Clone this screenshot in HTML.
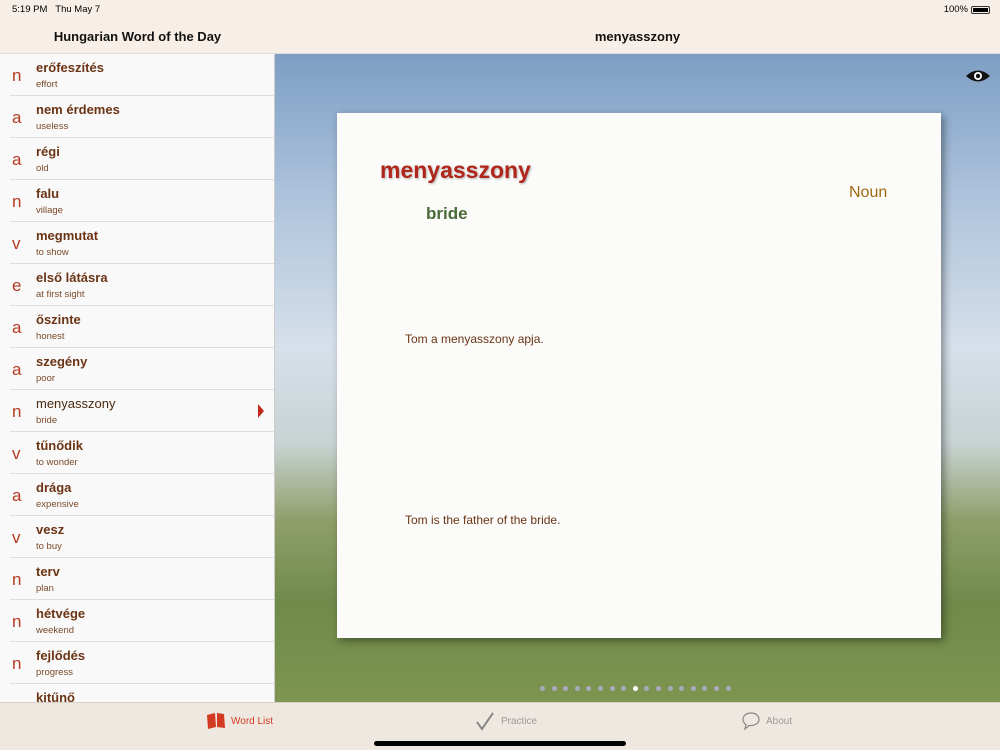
<!DOCTYPE html><html><head><meta charset="utf-8"><style>
*{margin:0;padding:0;box-sizing:border-box}
body{width:1000px;height:750px;overflow:hidden;position:relative;font-family:"Liberation Sans",sans-serif;background:#fff}
.bg{position:absolute;left:275px;top:54px;width:725px;height:648px;background:linear-gradient(180deg,#7d9ec3 0%,#a9c0da 20%,#d6e0ea 45%,#c9d3d4 60%,#8f9f6a 72%,#6f8a4a 85%,#7d9550 100%)}
.hdr{position:absolute;left:0;top:0;width:1000px;height:54px;background:#f7efe7;border-bottom:1px solid #ddd}
.side{position:absolute;left:0;top:54px;width:275px;height:696px;background:#f9f9f9;border-right:1px solid #ccc;overflow:hidden}
.row{height:42px;position:relative;border-bottom:1px solid #ddd;margin-left:10px}
.row .l{position:absolute;left:2px;top:12px;font-size:17px;color:#b53a22}
.row .w{position:absolute;left:26px;top:6px;font-size:13px;font-weight:bold;color:#6b3414}
.row .s{position:absolute;left:26px;top:25px;font-size:9.5px;color:#7a4a2a}
.card{position:absolute;left:337px;top:113px;width:604px;height:525px;background:#fbfbfa;box-shadow:3px 3px 8px rgba(0,0,0,.4)}
.tab{position:absolute;left:0;top:702px;width:1000px;height:48px;background:#efe8e0;border-top:1px solid #d8d0c8}
</style></head><body>
<div class="bg"></div>
<div class="hdr">
<div style="position:absolute;left:12px;top:4px;font-size:9.5px">5:19 PM&nbsp;&nbsp;&nbsp;Thu May 7</div>
<div style="position:absolute;left:0;width:275px;top:29px;text-align:center;font-size:13px;font-weight:bold;color:#111">Hungarian Word of the Day</div>
<div style="position:absolute;left:275px;width:725px;top:29px;text-align:center;font-size:13px;font-weight:bold;color:#111">menyasszony</div>
<div style="position:absolute;right:32px;top:4px;font-size:9.5px">100%</div>
<div style="position:absolute;right:10px;top:6px;width:19px;height:8px;border:1px solid #333;border-radius:2px;padding:1px"><div style="background:#000;height:100%"></div></div>
</div>
<div class="side">
<div class="row"><span class="l">n</span><span class="w">erőfeszítés</span><span class="s">effort</span></div>
<div class="row"><span class="l">a</span><span class="w">nem érdemes</span><span class="s">useless</span></div>
<div class="row"><span class="l">a</span><span class="w">régi</span><span class="s">old</span></div>
<div class="row"><span class="l">n</span><span class="w">falu</span><span class="s">village</span></div>
<div class="row"><span class="l">v</span><span class="w">megmutat</span><span class="s">to show</span></div>
<div class="row"><span class="l">e</span><span class="w">első látásra</span><span class="s">at first sight</span></div>
<div class="row"><span class="l">a</span><span class="w">őszinte</span><span class="s">honest</span></div>
<div class="row"><span class="l">a</span><span class="w">szegény</span><span class="s">poor</span></div>
<div class="row"><span class="l">n</span><span class="w" style="font-weight:normal;color:#4a2a10">menyasszony</span><span class="s">bride</span><span style="position:absolute;right:10px;top:14px;width:0;height:0;border-left:6px solid #c0281a;border-top:7px solid transparent;border-bottom:7px solid transparent"></span></div>
<div class="row"><span class="l">v</span><span class="w">tűnődik</span><span class="s">to wonder</span></div>
<div class="row"><span class="l">a</span><span class="w">drága</span><span class="s">expensive</span></div>
<div class="row"><span class="l">v</span><span class="w">vesz</span><span class="s">to buy</span></div>
<div class="row"><span class="l">n</span><span class="w">terv</span><span class="s">plan</span></div>
<div class="row"><span class="l">n</span><span class="w">hétvége</span><span class="s">weekend</span></div>
<div class="row"><span class="l">n</span><span class="w">fejlődés</span><span class="s">progress</span></div>
<div class="row"><span class="l">a</span><span class="w">kitűnő</span><span class="s">great</span></div>
<div class="row"><span class="l">n</span><span class="w">kefél</span><span class="s"></span></div>
</div>
<svg style="position:absolute;left:965px;top:68px" width="26" height="16" viewBox="0 0 26 16"><path d="M1 8Q13-3 25 8Q13 19 1 8Z" fill="#111"/><circle cx="13" cy="8" r="4" fill="#fff"/><circle cx="13" cy="8" r="2.2" fill="#111"/></svg>
<div class="card">
<div style="position:absolute;left:43px;top:44px;font-size:23px;font-weight:bold;color:#b0261a;text-shadow:1px 1px 2px rgba(0,0,0,.3)">menyasszony</div>
<div style="position:absolute;left:89px;top:91px;font-size:17px;font-weight:bold;color:#4a6a3a">bride</div>
<div style="position:absolute;left:512px;top:71px;font-size:16px;color:#a06a10">Noun</div>
<div style="position:absolute;left:68px;top:219px;font-size:12px;color:#6b3414">Tom a menyasszony apja.</div>
<div style="position:absolute;left:68px;top:400px;font-size:12px;color:#6b3414">Tom is the father of the bride.</div>
</div>
<div style="position:absolute;left:540px;top:686px;display:flex;gap:6.6px">
<i style="width:5px;height:5px;border-radius:50%;background:#aab"></i><i style="width:5px;height:5px;border-radius:50%;background:#aab"></i><i style="width:5px;height:5px;border-radius:50%;background:#aab"></i><i style="width:5px;height:5px;border-radius:50%;background:#aab"></i><i style="width:5px;height:5px;border-radius:50%;background:#aab"></i><i style="width:5px;height:5px;border-radius:50%;background:#aab"></i><i style="width:5px;height:5px;border-radius:50%;background:#aab"></i><i style="width:5px;height:5px;border-radius:50%;background:#aab"></i><i style="width:5px;height:5px;border-radius:50%;background:#fff"></i><i style="width:5px;height:5px;border-radius:50%;background:#aab"></i><i style="width:5px;height:5px;border-radius:50%;background:#aab"></i><i style="width:5px;height:5px;border-radius:50%;background:#aab"></i><i style="width:5px;height:5px;border-radius:50%;background:#aab"></i><i style="width:5px;height:5px;border-radius:50%;background:#aab"></i><i style="width:5px;height:5px;border-radius:50%;background:#aab"></i><i style="width:5px;height:5px;border-radius:50%;background:#aab"></i><i style="width:5px;height:5px;border-radius:50%;background:#aab"></i></div>
<div class="tab">
<svg style="position:absolute;left:206px;top:9px" width="20" height="18" viewBox="0 0 20 18"><path d="M1 3L9 1L10 15L2 17Z M11 1L18 2L19 16L11 15Z" fill="#d23a22"/></svg>
<div style="position:absolute;left:231px;top:13px;font-size:10px;color:#d23a22">Word List</div>
<svg style="position:absolute;left:475px;top:8px" width="20" height="20" viewBox="0 0 20 20"><path d="M2 11L7 18L18 2" fill="none" stroke="#888" stroke-width="2"/></svg>
<div style="position:absolute;left:501px;top:13px;font-size:10px;color:#999">Practice</div>
<svg style="position:absolute;left:741px;top:8px" width="20" height="20" viewBox="0 0 20 20"><path d="M10 2C5 2 2 5 2 8.5C2 11 4 13 5 13.5L4 18L8 14.5C14 15 18 12 18 8.5C18 5 15 2 10 2Z" fill="none" stroke="#888" stroke-width="1.2"/></svg>
<div style="position:absolute;left:766px;top:13px;font-size:10px;color:#999">About</div>
<div style="position:absolute;left:374px;top:38px;width:252px;height:5px;border-radius:3px;background:#000"></div>
</div>
</body></html>
